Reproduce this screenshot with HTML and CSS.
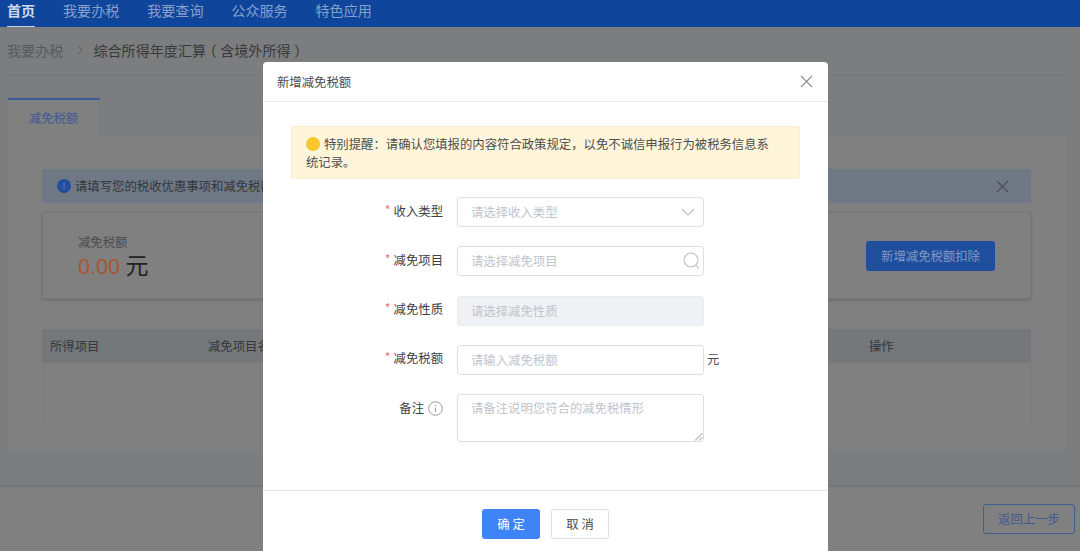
FILE: index.html
```html
<!DOCTYPE html>
<html lang="zh-CN">
<head>
<meta charset="utf-8">
<title>新增减免税额</title>
<link rel="stylesheet" href="styles.css">
</head>
<body>
<div class="page">
  <nav class="nav">
    <a class="nav-item active">首页</a>
    <a class="nav-item">我要办税</a>
    <a class="nav-item">我要查询</a>
    <a class="nav-item">公众服务</a>
    <a class="nav-item">特色应用</a>
  </nav>
  <main class="main">
    <div class="crumbs">
      <span class="crumb-link">我要办税</span>
      <svg class="crumb-sep" width="8" height="12" viewBox="0 0 8 12"><path d="M1.5 1.5 6 6l-4.500 4.500" fill="none" stroke="#5c5d5f" stroke-width="1"/></svg>
      <span class="crumb-current">综合所得年度汇算<span class="paren">（</span>含境外所得<span class="paren">）</span></span>
    </div>
    <div class="tabs"><div class="tab">减免税额</div></div>
    <section class="panel">
      <div class="info-bar">
        <span class="info-icon">!</span>
        <span class="info-text">请填写您的税收优惠事项和减免税额</span>
        <svg class="info-close" width="13" height="13" viewBox="0 0 13 13"><path d="M1 1l11 11M12 1 1 12" stroke="#4b4f55" stroke-width="1.200"/></svg>
      </div>
      <div class="summary">
        <div class="summary-main">
          <div class="summary-label">减免税额</div>
          <div class="summary-value"><span class="amount">0.00</span> <span class="unit">元</span></div>
        </div>
        <button class="add-btn">新增减免税额扣除</button>
      </div>
      <div class="table">
        <div class="table-head">
          <span class="col col-a">所得项目</span>
          <span class="col col-b">减免项目名称</span>
          <span class="col col-c">操作</span>
        </div>
        <div class="table-body"></div>
      </div>
    </section>
  </main>
  <footer class="bottom">
    <button class="back-btn">返回上一步</button>
  </footer>

  <div class="modal">
    <header class="modal-head">
      <span class="modal-title">新增减免税额</span>
      <svg class="modal-close" width="13" height="13" viewBox="0 0 13 13"><path d="M1 1l11 11M12 1 1 12" stroke="#8a8d92" stroke-width="1.100"/></svg>
    </header>
    <div class="modal-body">
      <div class="alert">
        <p class="alert-text"><span class="alert-icon"></span>特别提醒：请确认您填报的内容符合政策规定，以免不诚信申报行为被税务信息系统记录。</p>
      </div>
      <div class="form">
        <div class="row">
          <label class="label"><span class="star">*</span>收入类型</label>
          <div class="control">
            <span class="placeholder">请选择收入类型</span>
            <svg class="ctl-icon chevron" width="14" height="8" viewBox="0 0 14 8"><path d="M1 1l6 6 6-6" fill="none" stroke="#b9bcc2" stroke-width="1.100"/></svg>
          </div>
        </div>
        <div class="row">
          <label class="label"><span class="star">*</span>减免项目</label>
          <div class="control">
            <span class="placeholder">请选择减免项目</span>
            <svg class="ctl-icon search" width="17" height="18" viewBox="0 0 17 18"><circle cx="8" cy="8" r="7" fill="none" stroke="#b9bcc2" stroke-width="1.100"/><path d="M13 13l3 4" fill="none" stroke="#b9bcc2" stroke-width="1.100"/></svg>
          </div>
        </div>
        <div class="row">
          <label class="label"><span class="star">*</span>减免性质</label>
          <div class="control disabled"><span class="placeholder">请选择减免性质</span></div>
        </div>
        <div class="row">
          <label class="label"><span class="star">*</span>减免税额</label>
          <div class="control"><span class="placeholder">请输入减免税额</span></div>
          <span class="suffix">元</span>
        </div>
        <div class="row row-area">
          <label class="label">备注<svg class="label-info" width="15" height="15" viewBox="0 0 15 15"><circle cx="7.500" cy="7.500" r="6.800" fill="none" stroke="#8d9096" stroke-width="0.900"/><path d="M7.500 6.500v4.500M7.500 3.800v1.300" stroke="#8d9096" stroke-width="0.900"/></svg></label>
          <div class="control area">
            <span class="placeholder">请备注说明您符合的减免税情形</span>
            <svg class="resizer" width="9" height="9" viewBox="0 0 9 9"><path d="M1 8.500 8.500 1M5 8.500 8.500 5" stroke="#777" stroke-width="0.800"/></svg>
          </div>
        </div>
      </div>
    </div>
    <footer class="modal-foot">
      <button class="btn primary">确 定</button>
      <button class="btn plain">取 消</button>
    </footer>
  </div>
</div>
</body>
</html>
```
FILE: styles.css
```css
* { box-sizing: border-box; }
html, body { margin: 0; height: 100%; overflow: hidden; }
body {
  font-family: "Noto Sans CJK SC", "Liberation Sans", sans-serif;
  font-size: 12.36px;
  color: #3d3e40;
  background: #7b7d7f;
}
button { font-family: inherit; font-size: inherit; cursor: pointer; }

.page { position: relative; width: 1080px; height: 551px; display: flex; flex-direction: column; overflow: hidden; }

.nav { height: 27px; flex: none; background: #0f469c; display: flex; gap: 27.800px; padding-left: 7px; }
.nav-item { font-size: 14.1px; line-height: 21px; color: #86a0cc; position: relative; height: 27px; }
.nav-item.active { color: #cfdaec; font-weight: 700; border-bottom: 1px solid #c5d2e8; }

.main { flex: 1; padding: 0 14px 0 7px; min-height: 0; }
.crumbs { height: 49px; padding-bottom: 2px; display: flex; align-items: center; font-size: 14.1px; border-bottom: 1px solid #75777a; }
.crumb-link { color: #595a5c; }
.crumb-sep { margin: 0 9px 0 13px; }
.crumb-current { color: #38393b; }
.paren { font-feature-settings: "halt"; margin: 0 3.500px; }

.tabs { margin-top: 22px; height: 37px; display: flex; padding-left: 1px; }
.tab { width: 92px; height: 38px; padding-top: 2px; border-top: 2px solid #3c5a9a; border-right: 1px solid #76787a; background: #808080; color: #3e5a96; text-align: center; line-height: 32px; }

.panel { height: 315px; background: #808080; padding: 34px 35px 0; }

.info-bar { height: 34px; background: #6f7885; border-radius: 2px; display: flex; align-items: center; padding-left: 15px; position: relative; }
.info-icon { width: 14px; height: 14px; border-radius: 50%; background: #1f4f9e; color: #7c91bd; font-size: 9px; line-height: 14px; text-align: center; margin-right: 4px; }
.info-text { color: #33363b; }
.info-close { margin-left: auto; margin-right: 22px; }

.summary { margin-top: 9px; height: 87px; border: 1px solid #74767a; box-shadow: 0 1px 3px rgba(0,0,0,.2); display: flex; align-items: center; justify-content: space-between; padding: 0 35px; }
.summary-main { margin-top: 6px; }
.summary-label { line-height: 16px; color: #4a4b4d; }
.summary-value { line-height: 28px; font-family: "Liberation Sans", sans-serif; }
.amount { font-size: 21.600px; color: #a9562f; }
.unit { font-size: 23px; color: #202122; font-family: "Noto Sans CJK SC", sans-serif; margin-left: 2px; }
.add-btn { width: 129px; height: 30px; border: 0; border-radius: 3px; background: #1f4f9c; color: #8298c4; padding: 0; }

.table { margin-top: 30px; border: 1px solid #7a7b7d; border-top: 0; }
.table-head { height: 34px; background: #75787b; position: relative; display: flex; align-items: center; color: #35363a; margin: 0 -1px; }
.col-a { margin-left: 8px; width: 158px; }
.col-b { width: 661px; }
.table-body { height: 62px; }

.bottom { flex: none; height: 64px; background: #808080; box-shadow: 0 -1px 3px rgba(0,0,0,.12); display: flex; justify-content: flex-end; align-items: flex-start; padding: 17px 5px 0 0; }
.back-btn { width: 92px; height: 30px; background: transparent; border: 1px solid #3f5d92; border-radius: 3px; color: #3f5a90; padding: 0; }

.modal { position: absolute; left: 263px; top: 62px; width: 565px; height: 500px; background: #fff; border-radius: 4px; display: flex; flex-direction: column; }
.modal-head { height: 40px; flex: none; border-bottom: 1px solid #e9eaec; display: flex; align-items: center; justify-content: space-between; padding: 0 15px 0 14px; color: #4a4b4d; }
.modal-body { flex: none; height: 389px; padding: 24px 28px 0; border-bottom: 1px solid #e4e5e8; }
.alert { height: 53px; background: #fef5db; border: 1px solid #fbeecb; border-radius: 2px; padding: 8px 15px 0 14px; }
.alert-text { margin: 0; line-height: 18px; color: #4e4e4c; width: 470px; font-family: "Noto Sans CJK TC", sans-serif; }
.alert-icon { display: inline-block; width: 14px; height: 14px; border-radius: 50%; background: #fcc62e; margin-right: 4px; vertical-align: -2px; }

.form { margin-top: 18px; display: flex; flex-direction: column; gap: 19.300px; }
.row { display: flex; align-items: center; height: 30px; position: relative; }
.row-area { height: 48px; align-items: flex-start; }
.label { width: 152px; margin-right: 14px; text-align: right; color: #3f4042; line-height: 28px; margin-top: -3px; display: flex; justify-content: flex-end; align-items: center; }
.row-area .label { margin-top: 0; }
.star { color: #ec6a60; margin-right: 3px; margin-top: -2px; }
.label-info { margin-left: 4px; }
.control { width: 247px; height: 30px; border: 1px solid #dcdfe6; border-radius: 3px; display: flex; align-items: center; justify-content: space-between; padding: 0 8px 0 13px; position: relative; }
.control.disabled { background: #f0f1f4; border-color: #e9ebef; }
.control.area { height: 48px; align-items: flex-start; padding-top: 3px; }
.placeholder { color: #c0c4cc; line-height: 20px; }
.search { margin-right: -5px; }
.resizer { position: absolute; right: 0; bottom: 0; }
.suffix { margin-left: 3px; color: #4c4d4f; margin-top: -1px; }

.modal-foot { display: flex; gap: 11px; padding: 18px 0 0 219px; }
.btn { width: 58px; height: 30px; border-radius: 3px; padding: 0; }
.primary { background: #3e84f7; border: 0; color: #fff; }
.plain { background: #fff; border: 1px solid #dcdfe6; color: #4a4b4d; }
```
